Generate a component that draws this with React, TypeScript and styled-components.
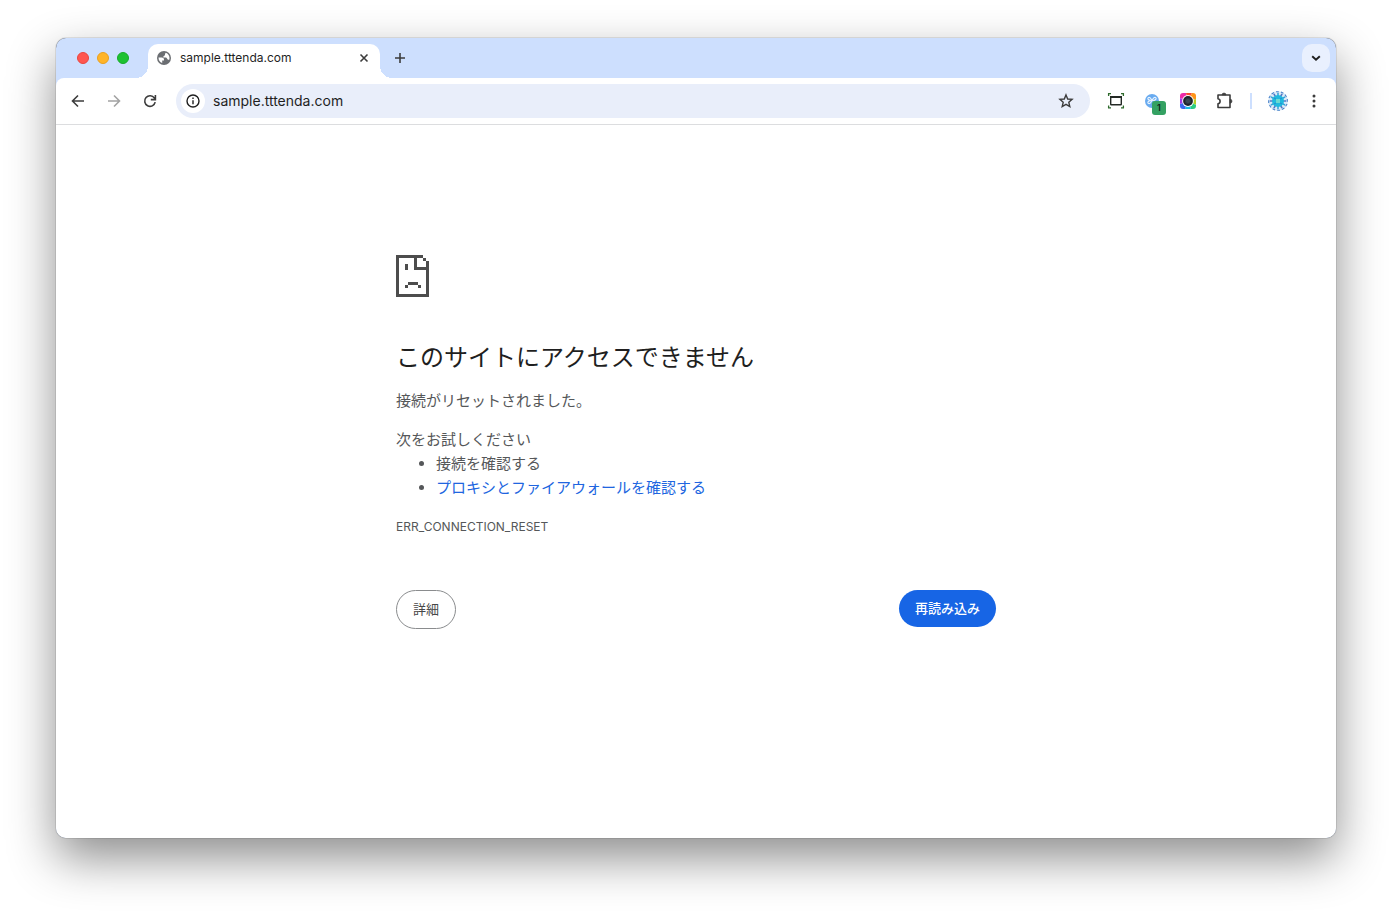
import React from "react";
import styled, { createGlobalStyle } from "styled-components";

const GlobalStyle = createGlobalStyle`
  *, *::before, *::after { box-sizing: border-box; }
  html { background: #fff; }
  body {
    margin: 0;
    font-family: Inter, "Noto Sans CJK JP", sans-serif;
    color: #1f1f1f;
  }
  button, input { font: inherit; color: inherit; }
  button { border: 0; padding: 0; background: none; cursor: pointer; }
  svg { display: block; flex: none; }
`;

const Desktop = styled.div`
  display: flex;
  min-height: 100vh;
  padding: 38px 56px 74px;
`;

const BrowserWindow = styled.div`
  flex: 1;
  min-width: 0;
  display: flex;
  flex-direction: column;
  overflow: hidden;
  border-radius: 10px;
  background: #cddffe;
  box-shadow: 0 0 1px rgba(0, 0, 0, 0.9), 0 20px 48px rgba(0, 0, 0, 0.45);
`;

const TabStrip = styled.div`
  display: flex;
  align-items: center;
  height: 40px;
  padding: 0 6px 0 21px;
`;

const TrafficLights = styled.div`
  display: flex;
  gap: 8px;
  margin-right: 19px;
`;

const Light = styled.button<{ $color: string; $edge: string }>`
  width: 12px;
  height: 12px;
  border: 1px solid ${(p) => p.$edge};
  border-radius: 50%;
  background: ${(p) => p.$color};
`;

const Tab = styled.div`
  position: relative;
  display: flex;
  align-items: center;
  align-self: flex-end;
  width: 232px;
  height: 34px;
  padding: 0 9px 6px 8px;
  border-radius: 10px 10px 0 0;
  background: #fff;

  &::before, &::after {
    content: "";
    position: absolute;
    bottom: 0;
    width: 12px;
    height: 12px;
  }
  &::before {
    right: 100%;
    background: radial-gradient(circle at 0 0, transparent 12px, #fff 12px);
  }
  &::after {
    left: 100%;
    background: radial-gradient(circle at 100% 0, transparent 12px, #fff 12px);
  }
`;

const TabTitle = styled.span`
  flex: 1;
  margin-left: 8px;
  font-size: 12px;
  line-height: 16px;
`;

const IconButton = styled.button<{ $size: number; $dim?: boolean }>`
  display: flex;
  align-items: center;
  justify-content: center;
  flex: none;
  width: ${(p) => p.$size}px;
  height: ${(p) => p.$size}px;
  color: ${(p) => (p.$dim ? "#a3a3a3" : "#3c3c3c")};
`;

const NewTabButton = styled(IconButton)`
  margin-left: 8px;
`;

const TabSearchButton = styled(IconButton)`
  margin-left: auto;
  border-radius: 10px;
  background: #e9f0fe;
  color: #1f1f1f;
`;

const Toolbar = styled.div`
  display: flex;
  align-items: center;
  height: 47px;
  padding: 0 8px;
  border-bottom: 1px solid #dcdddf;
  border-radius: 8px 8px 0 0;
  background: #fff;
`;

const NavButtons = styled.div`
  display: flex;
  gap: 8px;
  margin-right: 12px;
`;

const AddressBar = styled.div`
  flex: 1;
  min-width: 0;
  display: flex;
  align-items: center;
  height: 34px;
  padding: 0 10px 0 5px;
  border-radius: 17px;
  background: #e9eefa;
`;

const SiteInfo = styled(IconButton)`
  border-radius: 50%;
  background: #fff;
  color: #1f1f1f;
`;

const AddressInput = styled.input`
  flex: 1;
  min-width: 0;
  margin-left: 8px;
  padding: 0;
  border: 0;
  outline: 0;
  background: none;
  font-size: 14px;
  line-height: 20px;
`;

const Extensions = styled.div`
  display: flex;
  align-items: center;
  gap: 8px;
  margin-left: 12px;
`;

const Badge = styled.span`
  position: absolute;
  right: 0;
  bottom: 0;
  width: 14px;
  border-radius: 3px;
  background: #34a162;
  color: #10251a;
  font-size: 9px;
  font-weight: 600;
  line-height: 14px;
  text-align: center;
`;

const BadgedButton = styled(IconButton)`
  position: relative;
`;

const Divider = styled.span`
  width: 2px;
  height: 16px;
  margin: 0 4px;
  background: #cddffe;
`;

const Page = styled.main`
  flex: 1;
  padding: 130px 24px 60px;
  background: #fff;
  color: #555759;
  font-size: 15px;
  line-height: 24px;
`;

const ErrorPanel = styled.div`
  max-width: 600px;
  margin: 0 auto;
`;

const Heading = styled.h1`
  margin: 46px 0 16px;
  color: #1f1f1f;
  font-size: 24px;
  font-weight: 400;
  line-height: 30px;
`;

const Message = styled.p`
  margin: 0 0 15px;
`;

const SuggestionTitle = styled.p`
  margin: 0;
`;

const Suggestions = styled.ul`
  margin: 0 0 15px;
  padding: 0 0 0 40px;
`;

const Link = styled.a`
  color: #2065e0;
  text-decoration: none;
`;

const ErrorCode = styled.div`
  font-size: 12px;
`;

const Actions = styled.div`
  display: flex;
  align-items: flex-start;
  justify-content: space-between;
  margin-top: 51px;
`;

const ActionButton = styled.button<{ $primary?: boolean }>`
  padding: ${(p) => (p.$primary ? "8px 16px 9px" : "9px 16px")};
  border: ${(p) => (p.$primary ? "0" : "1px solid #8a8c8e")};
  border-radius: 20px;
  background: ${(p) => (p.$primary ? "#1765e5" : "#fff")};
  color: ${(p) => (p.$primary ? "#fff" : "#474747")};
  font-size: 13px;
  font-weight: ${(p) => (p.$primary ? 500 : 400)};
  line-height: ${(p) => (p.$primary ? 20 : 19)}px;
`;

const stroke = { fill: "none", stroke: "currentColor", strokeWidth: 1.6 };

const GlobeIcon = () => (
  <svg width="16" height="16" viewBox="0 0 16 16">
    <circle cx="8" cy="8" r="7" fill="#6b6e72" />
    <path
      d="M2.500 7.500h3.300c1.300 0 2.200.9 2.200 2.100v.8H6.200v2.700c-2.300-.8-3.700-2.900-3.700-5.600zM9.800 2.700c2.200.8 3.700 2.800 3.700 5.300 0 .7-.1 1.300-.3 1.800-1 .1-1.800-.4-2.200-1.300-.3-.8-.7-1.100-1.600-1.100H7.300c0-1.300.7-1.900 1.700-1.900V4.300c0-.6.300-1.100.8-1.600z"
      fill="#fff"
    />
  </svg>
);

const CloseIcon = () => (
  <svg width="14" height="14" viewBox="0 0 14 14" {...stroke}>
    <path d="m3.500 3.500 7 7m0-7-7 7" />
  </svg>
);

const PlusIcon = () => (
  <svg width="12" height="12" viewBox="0 0 12 12" {...stroke}>
    <path d="M6 1v10M1 6h10" />
  </svg>
);

const ChevronIcon = () => (
  <svg width="12" height="12" viewBox="0 0 12 12" {...stroke} strokeWidth="1.900">
    <path d="m2.200 4.200 3.800 3.600 3.800-3.600" />
  </svg>
);

const ArrowIcon = ({ forward }: { forward?: boolean }) => (
  <svg width="16" height="16" viewBox="0 0 16 16" {...stroke}>
    <path d={forward ? "M2 8h11.500M8 2.500 13.500 8 8 13.500" : "M14 8H2.500M8 2.500 2.500 8 8 13.500"} />
  </svg>
);

const ReloadIcon = () => (
  <svg width="16" height="16" viewBox="0 0 16 16" {...stroke}>
    <path d="M13.200 9.200A5.300 5.300 0 1 1 12.400 5.100L13.300 6.300M13.400 2v4.600H8.800" />
  </svg>
);

const InfoIcon = () => (
  <svg width="16" height="16" viewBox="0 0 16 16" {...stroke} strokeWidth="1.400">
    <circle cx="8" cy="8" r="6" />
    <path d="M8 7.300v4M8 4.600v1.500" />
  </svg>
);

const StarIcon = () => (
  <svg width="16" height="16" viewBox="0 0 16 16" {...stroke} strokeWidth="1.400">
    <path d="m8 1.900 1.700 4.100 4.400.4-3.300 2.900 1 4.300L8 11.300l-3.800 2.300 1-4.300-3.300-2.900 4.400-.4z" />
  </svg>
);

const CaptureIcon = () => (
  <svg width="18" height="18" viewBox="0 0 18 18" fill="none">
    <rect x="3.700" y="4.700" width="10.600" height="8" rx="0.500" stroke="#242a25" strokeWidth="1.400" />
    <path d="M3 5h12" stroke="#242a25" strokeWidth="2" />
    <path d="M1.600 4V1.600H4m10 0h2.400V4m0 9.500v2.400H14m-10 0H1.600v-2.400" stroke="#2f6b2d" strokeWidth="1.300" />
  </svg>
);

const BlueOrbIcon = () => (
  <svg width="18" height="18" viewBox="0 0 18 18" fill="none">
    <circle cx="9" cy="9" r="7" fill="#69abf0" />
    <path d="M9 8.500C8 6.500 6.500 4.600 5.300 5.600s.2 3 3.700 2.900zM9 8.500c1-2 2.500-3.900 3.700-2.900s-.2 3-3.700 2.900zM9 8.500c-1 2-2.500 3.900-3.700 2.900s.2-3 3.700-2.900z" stroke="#e7f3ff" strokeWidth="1.200" />
  </svg>
);

const LensIcon = () => (
  <svg width="16" height="16" viewBox="0 0 16 16">
    <defs>
      <clipPath id="lens-clip"><rect width="16" height="16" rx="3" /></clipPath>
    </defs>
    <g clipPath="url(#lens-clip)">
      <path d="M8 8 0 5V0h6z" fill="#ee29a8" />
      <path d="M8 8 6 0h6z" fill="#f84832" />
      <path d="m8 8 4-8h4v6z" fill="#ff9418" />
      <path d="m8 8 8-2v6z" fill="#b6ce25" />
      <path d="m8 8 8 4v4h-5z" fill="#2bcb80" />
      <path d="m8 8 3 8H5z" fill="#16bee5" />
      <path d="m8 8-3 8H0v-5z" fill="#396af1" />
      <path d="m8 8-8 3V5z" fill="#a23be9" />
    </g>
    <circle cx="8" cy="8" r="5.900" fill="#fff" />
    <circle cx="8" cy="8" r="4.900" fill="#20242d" />
    <circle cx="8" cy="8" r="2.700" fill="#3b4653" stroke="#2b343f" />
  </svg>
);

const PuzzleIcon = () => (
  <svg width="20" height="20" viewBox="0 0 20 20" {...stroke} strokeLinejoin="round">
    <path d="M4 4h12v12.500H4v-3.700a2.600 2.600 0 0 0 0-5.100z" />
    <path d="M8 4a2 2 0 0 1 4 0zM16 8.200a2 2 0 0 1 0 4z" fill="currentColor" strokeWidth="0.600" />
  </svg>
);

const AvatarIcon = () => (
  <svg width="20" height="20" viewBox="0 0 20 20" fill="none">
    <circle cx="10" cy="10" r="10" fill="#dcebf8" />
    {Array.from({ length: 12 }, (_, i) => (
      <g key={i} transform={`rotate(${i * 30} 10 10)`}>
        <path d="M10 5V1.800" stroke={i % 2 ? "#5577c4" : "#38a6d8"} strokeWidth="1.600" />
        <path d="M8 .7h2.800" stroke="#4a83ca" strokeWidth="1.100" />
      </g>
    ))}
    <circle cx="10" cy="10" r="6" fill="#20b9dd" />
    <path d="m6 7 2 1m6-1-2 1m-6 5 2-1m6 1-2-1" stroke="#248bd2" />
    <rect x="8" y="8" width="4" height="4" fill="#6bd9d0" />
  </svg>
);

const MenuIcon = () => (
  <svg width="16" height="16" viewBox="0 0 16 16" fill="currentColor">
    <circle cx="8" cy="3" r="1.500" />
    <circle cx="8" cy="8" r="1.500" />
    <circle cx="8" cy="13" r="1.500" />
  </svg>
);

const SadPageIcon = () => (
  <svg width="33" height="42" viewBox="0 0 33 42" fill="#4d4d4d" shapeRendering="crispEdges">
    <path d="M0 0h27v3h-6v9h9V6h3v36H0zM3 3v36h27V15H18V3z" fillRule="evenodd" />
    <path d="M27 3h3v3h-3zM9 9h3v6H9zM12 27h10v3H12zM9 30h3v3H9zM22 30h3v3h-3z" />
  </svg>
);

export default function App() {
  return (
    <>
      <GlobalStyle />
      <Desktop>
        <BrowserWindow>
          <TabStrip>
            <TrafficLights>
              <Light $color="#ff5650" $edge="#e9453f" aria-label="閉じる" />
              <Light $color="#ffb429" $edge="#e9a01f" aria-label="しまう" />
              <Light $color="#1dc231" $edge="#17ab29" aria-label="フルスクリーン" />
            </TrafficLights>
            <Tab>
              <GlobeIcon />
              <TabTitle>sample.tttenda.com</TabTitle>
              <IconButton $size={14} aria-label="タブを閉じる"><CloseIcon /></IconButton>
            </Tab>
            <NewTabButton $size={24} aria-label="新しいタブ"><PlusIcon /></NewTabButton>
            <TabSearchButton $size={28} aria-label="タブを検索"><ChevronIcon /></TabSearchButton>
          </TabStrip>
          <Toolbar>
            <NavButtons>
              <IconButton $size={28} aria-label="戻る"><ArrowIcon /></IconButton>
              <IconButton $size={28} $dim aria-label="進む"><ArrowIcon forward /></IconButton>
              <IconButton $size={28} aria-label="再読み込み"><ReloadIcon /></IconButton>
            </NavButtons>
            <AddressBar>
              <SiteInfo $size={24} aria-label="サイト情報"><InfoIcon /></SiteInfo>
              <AddressInput aria-label="アドレス" defaultValue="sample.tttenda.com" />
              <IconButton $size={28} aria-label="ブックマーク"><StarIcon /></IconButton>
            </AddressBar>
            <Extensions>
              <IconButton $size={28} aria-label="キャプチャ"><CaptureIcon /></IconButton>
              <BadgedButton $size={28} aria-label="拡張機能 1">
                <BlueOrbIcon />
                <Badge>1</Badge>
              </BadgedButton>
              <IconButton $size={28} aria-label="カメラ"><LensIcon /></IconButton>
              <IconButton $size={28} aria-label="拡張機能"><PuzzleIcon /></IconButton>
              <Divider />
              <IconButton $size={28} aria-label="プロフィール"><AvatarIcon /></IconButton>
              <IconButton $size={28} aria-label="メニュー"><MenuIcon /></IconButton>
            </Extensions>
          </Toolbar>
          <Page lang="ja">
            <ErrorPanel>
              <SadPageIcon />
              <Heading>このサイトにアクセスできません</Heading>
              <Message>接続がリセットされました。</Message>
              <SuggestionTitle>次をお試しください</SuggestionTitle>
              <Suggestions>
                <li>接続を確認する</li>
                <li><Link href="#proxy">プロキシとファイアウォールを確認する</Link></li>
              </Suggestions>
              <ErrorCode>ERR_CONNECTION_RESET</ErrorCode>
              <Actions>
                <ActionButton>詳細</ActionButton>
                <ActionButton $primary>再読み込み</ActionButton>
              </Actions>
            </ErrorPanel>
          </Page>
        </BrowserWindow>
      </Desktop>
    </>
  );
}
